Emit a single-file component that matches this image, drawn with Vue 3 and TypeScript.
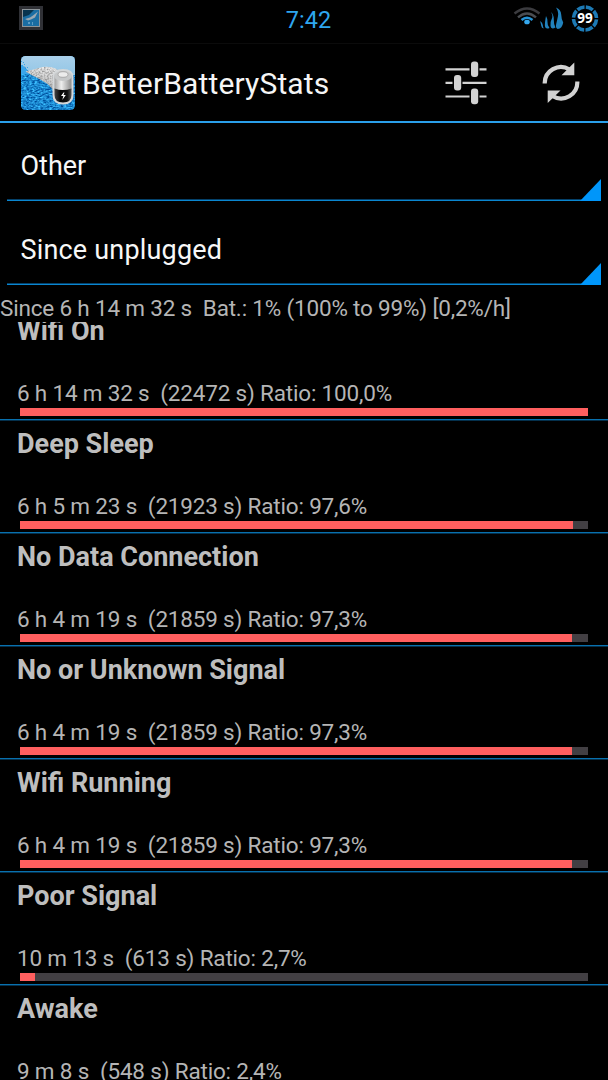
<script setup lang="ts">
interface StatRow {
  name: string
  detail: string
  ratio: number
}

const spinners: { label: string; cls: string }[] = [
  { label: 'Other', cls: 'first' },
  { label: 'Since unplugged', cls: 'second' },
]

const rows: StatRow[] = [
  { name: 'Wifi On', detail: '6 h 14 m 32 s  (22472 s) Ratio: 100,0%', ratio: 100 },
  { name: 'Deep Sleep', detail: '6 h 5 m 23 s  (21923 s) Ratio: 97,6%', ratio: 97.4 },
  { name: 'No Data Connection', detail: '6 h 4 m 19 s  (21859 s) Ratio: 97,3%', ratio: 97.1 },
  { name: 'No or Unknown Signal', detail: '6 h 4 m 19 s  (21859 s) Ratio: 97,3%', ratio: 97.1 },
  { name: 'Wifi Running', detail: '6 h 4 m 19 s  (21859 s) Ratio: 97,3%', ratio: 97.1 },
  { name: 'Poor Signal', detail: '10 m 13 s  (613 s) Ratio: 2,7%', ratio: 2.7 },
  { name: 'Awake', detail: '9 m 8 s  (548 s) Ratio: 2,4%', ratio: 2.4 },
]
</script>

<template>
  <div class="screen">
    <header class="status">
      <svg class="notif" width="26" height="26" viewBox="0 0 26 26">
        <rect x="1" y="1" width="24" height="24" fill="#303136" />
        <rect x="4" y="4" width="18" height="18" fill="#8d9499" />
        <rect x="5" y="5" width="16" height="16" fill="#1a6da3" />
        <path d="M5 5h11l-5 5-6 2z" fill="#08344f" />
        <path d="M7 14l5-1.500 3-2 5-4-3 6-4 2-3 1z" fill="#9aa8b2" />
        <path d="M10 17h2v2h-2zM14 17h1v3h-1z" fill="#5b9cc4" />
      </svg>
      <span class="clock">7:42</span>
      <div class="indicators">
        <svg width="28" height="24" viewBox="0 0 28 24" fill="none">
          <path d="M1.500 8.500Q14 -1.500 26.500 8.500" stroke="#3b3b3f" stroke-width="2.400" />
          <path d="M5 12.300Q14 4.500 23 12.300" stroke="#4a4d52" stroke-width="2.400" />
          <path d="M8.500 15Q14 10.500 19.500 15" stroke="#2492d6" stroke-width="2.600" />
          <ellipse cx="14" cy="17" rx="2.800" ry="2.300" fill="#35a8ee" />
        </svg>
        <svg class="bars" width="25" height="24" viewBox="0 0 25 24" fill="#2182bd">
          <path d="M0 14q2.600 1.500 2.800 4t1 3.500q-2.300-.3-2.600-2.700T0 14z" />
          <path d="M6 9q1.800 3 1.500 6t2 6q-4 1.500-4.500-1.500T6 9z" />
          <path d="M11 5q3 3 2.800 7.500t1.700 8q-4.500 2.500-5-1.500t1.200-7T11 5z" />
          <path d="M16 0.500q5 2 5.200 7t2 8q-1 6-5.500 6.500-2.500-1-1.500-5t1.800-8T16 .5z" />
        </svg>
        <svg width="28" height="28" viewBox="0 0 28 28">
          <circle cx="14" cy="13.500" r="11.500" fill="none" stroke="#1d7ab5" stroke-width="3.600" pathLength="100" stroke-dasharray="10.600 1.900" stroke-dashoffset="-1.200" />
          <text x="14" y="18" text-anchor="middle" class="level">99</text>
        </svg>
      </div>
    </header>

    <nav class="actionbar">
      <svg class="logo" width="54" height="54" viewBox="0 0 54 54">
        <defs>
          <clipPath id="tile"><rect width="54" height="54" rx="4.500" /></clipPath>
          <linearGradient id="sky" x1="0" y1="0" x2="0" y2="1">
            <stop offset="0" stop-color="#a9d0ea" />
            <stop offset="1" stop-color="#93c6e6" />
          </linearGradient>
          <linearGradient id="shell" x1="0.600" y1="0" x2="0.350" y2="1">
            <stop offset="0" stop-color="#ececec" />
            <stop offset=".5" stop-color="#c9c9c9" />
            <stop offset="1" stop-color="#75787b" />
          </linearGradient>
          <linearGradient id="metal" x1="0" y1="0" x2="1" y2="0">
            <stop offset="0" stop-color="#a0a0a0" />
            <stop offset=".4" stop-color="#eeeeee" />
            <stop offset="1" stop-color="#8c8c8c" />
          </linearGradient>
          <linearGradient id="cell" x1="0" y1="0" x2="1" y2="0">
            <stop offset="0" stop-color="#444" />
            <stop offset=".35" stop-color="#080808" />
            <stop offset=".75" stop-color="#111" />
            <stop offset="1" stop-color="#555" />
          </linearGradient>
          <filter id="ripple" x="0" y="0" width="1" height="1" color-interpolation-filters="sRGB">
            <feTurbulence type="fractalNoise" baseFrequency="0.35 0.7" numOctaves="2" seed="4" />
            <feColorMatrix values="0.5 0 0 0 -0.140  0.9 0 0 0 0.08  0.8 0 0 0 0.410  0 0 0 0 1" />
          </filter>
          <filter id="grain" x="0" y="0" width="1" height="1" color-interpolation-filters="sRGB">
            <feTurbulence type="fractalNoise" baseFrequency="0.6" numOctaves="2" seed="9" result="n" />
            <feColorMatrix in="n" values="0 0 0 0 0.400  0 0 0 0 0.400  0 0 0 0 0.400  1.500 0 0 0 -0.600" result="d" />
            <feComposite in="d" in2="SourceAlpha" operator="in" result="g" />
            <feMerge><feMergeNode in="SourceGraphic" /><feMergeNode in="g" /></feMerge>
          </filter>
        </defs>
        <g clip-path="url(#tile)">
          <rect width="54" height="54" filter="url(#ripple)" />
          <path d="M0 0h54v19H12l-3-3-3-2-2-3-4-2z" fill="url(#sky)" />
          <path d="M0 9h2v2h2v2h2v2h2v3H0z" fill="#3aa5ea" />
          <path d="M0 5h1v1H0zM3 8h1v1H3zM6 11h1v1H6zM2 6h1v1H2z" fill="#3aa5ea" />
          <path d="M4.500 15.500l8-2 9-2.500q8-1 14 2l5 5-6 22-3-7-5-5-8-5-8-4z" fill="url(#shell)" filter="url(#grain)" />
          <path d="M31.500 21q0-8 10.500-8t10.500 8v18q0 9.500-10.500 9.500T31.500 39z" fill="#d5d8da" />
          <path d="M33.500 20h17v14h-17z" fill="url(#metal)" />
          <path d="M33.500 32.500q8.500 3 17 0V39q0 7.500-8.500 7.500t-8.500-7.500z" fill="url(#cell)" />
          <ellipse cx="42" cy="20" rx="9" ry="5" fill="#c6c8c9" />
          <ellipse cx="42" cy="18.500" rx="5" ry="2.800" fill="#ececec" stroke="#a0a0a0" stroke-width=".8" />
          <path d="M42.500 36.500l-2.500 3.500h2.300l-1 4 3.500-5h-2.300l1-2.500z" fill="#fff" />
        </g>
      </svg>
      <h1 class="title">BetterBatteryStats</h1>
      <svg class="sliders" width="42" height="44" viewBox="0 0 42 44" fill="#d2d2d2">
        <path d="M.5 7.200h24v2.200H.5zM34.500 7.200h7v2.200h-7zM.5 20.700h7v2.200h-7zM17.500 20.700h24v2.200h-24zM.5 34.400h24v2.200H.5zM34.500 34.400h7v2.200h-7z" />
        <rect x="26" y="0.500" width="7.200" height="15.600" rx="3" />
        <rect x="9" y="14" width="7.200" height="15.600" rx="3" />
        <rect x="26" y="27.600" width="7.200" height="15.600" rx="3" />
      </svg>
      <svg class="refresh" width="38" height="42" viewBox="0 0 38 42">
        <path d="M2.700 21.500A16.200 16.200 0 0 1 27.500 7.500M35.300 19.500A16.200 16.200 0 0 1 10.500 34" fill="none" stroke="#d2d2d2" stroke-width="4.200" />
        <path d="M32.300.5v12.700H19.500zM5.700 41V28.400h12.800z" fill="#d2d2d2" />
      </svg>
    </nav>

    <section v-for="s in spinners" :key="s.label" class="spinner" :class="s.cls">
      <span>{{ s.label }}</span>
      <i class="corner"></i>
    </section>

    <p class="summary">Since 6 h 14 m 32 s&nbsp; Bat.: 1% (100% to 99%) [0,2%/h]</p>

    <main class="list">
      <article v-for="r in rows" :key="r.name" class="row">
        <h2 class="name">{{ r.name }}</h2>
        <p class="detail">{{ r.detail }}</p>
        <div class="track"><div class="fill" :style="{ width: r.ratio + '%' }"></div></div>
      </article>
    </main>
  </div>
</template>

<style>
html,
body {
  background: #000;
  overflow: hidden;
}
</style>

<style scoped>
.screen {
  width: 608px;
  height: 1080px;
  display: flex;
  flex-direction: column;
  overflow: hidden;
  background: #000;
  font-family: Roboto, sans-serif;
}
.status {
  flex: none;
  height: 44px;
  box-sizing: border-box;
  border-bottom: 1px solid #0b0b0b;
  display: grid;
  grid-template-columns: 1fr auto 1fr;
  align-items: start;
}
.notif {
  margin: 5px 0 0 18px;
}
.clock {
  color: #2ea6ef;
  font-size: 23.500px;
  line-height: 28px;
  margin-top: 6px;
  margin-left: 9px;
}
.indicators {
  display: flex;
  justify-content: flex-end;
  padding: 5px 9px 0 0;
}
.bars {
  margin-right: 6px;
  margin-left: -1px;
  margin-top: 2px;
}
.level {
  font: bold 13.500px 'Noto Sans', sans-serif;
  fill: #fff;
}
.actionbar {
  flex: none;
  height: 79px;
  box-sizing: border-box;
  border-bottom: 2px solid #2a9fea;
  display: flex;
  align-items: center;
  padding: 0 28px 0 21px;
}
.title {
  margin: 2px auto 0 7px;
  color: #f5f5f5;
  font-size: 30px;
  line-height: 36px;
  font-weight: 400;
  letter-spacing: 0.150px;
}
.sliders {
  margin-right: 55px;
}
.spinner {
  flex: none;
  box-sizing: border-box;
  height: 78px;
  margin: 0 7px;
  padding: 27px 0 0 13.500px;
  position: relative;
  color: #f7f7f7;
  font-size: 27px;
  line-height: 32px;
  border-bottom: 1px solid #0a86d0;
  box-shadow: inset 0 -1px 0 #04416a;
}
.second {
  height: 84px;
  padding-top: 33px;
  letter-spacing: 0.180px;
}
.corner {
  position: absolute;
  right: 0;
  bottom: -1px;
  width: 21px;
  height: 22px;
  background: #0096fa;
  clip-path: polygon(100% 0, 100% 100%, 0 100%);
}
.summary {
  flex: none;
  margin: 0;
  height: 37px;
  padding-top: 9px;
  box-sizing: border-box;
  color: #b5b5b5;
  font-size: 22.500px;
  letter-spacing: -0.180px;
  line-height: 28px;
  white-space: pre;
}
.list {
  flex: 1;
  min-height: 0;
  overflow: hidden;
  display: flex;
  flex-direction: column;
  justify-content: flex-start;
}
.row {
  flex: none;
  height: 113px;
  box-sizing: border-box;
  border-bottom: 1px solid #0870ae;
  box-shadow: 0 1px 0 #04304c;
  padding: 8px 20px 0 17px;
}
.row:first-child {
  margin-top: -15px;
}
.name {
  margin: 0;
  color: #bebebe;
  font-size: 27px;
  line-height: 32px;
  font-weight: 700;
}
.detail {
  margin: 32px 0 0;
  color: #b5b5b5;
  font-size: 22.500px;
  letter-spacing: -0.180px;
  line-height: 28px;
  white-space: pre;
}
.track {
  height: 8px;
  margin: 1px 0 0 3px;
  background: #423f43;
}
.fill {
  height: 100%;
  background: #ff5f5f;
}
</style>
